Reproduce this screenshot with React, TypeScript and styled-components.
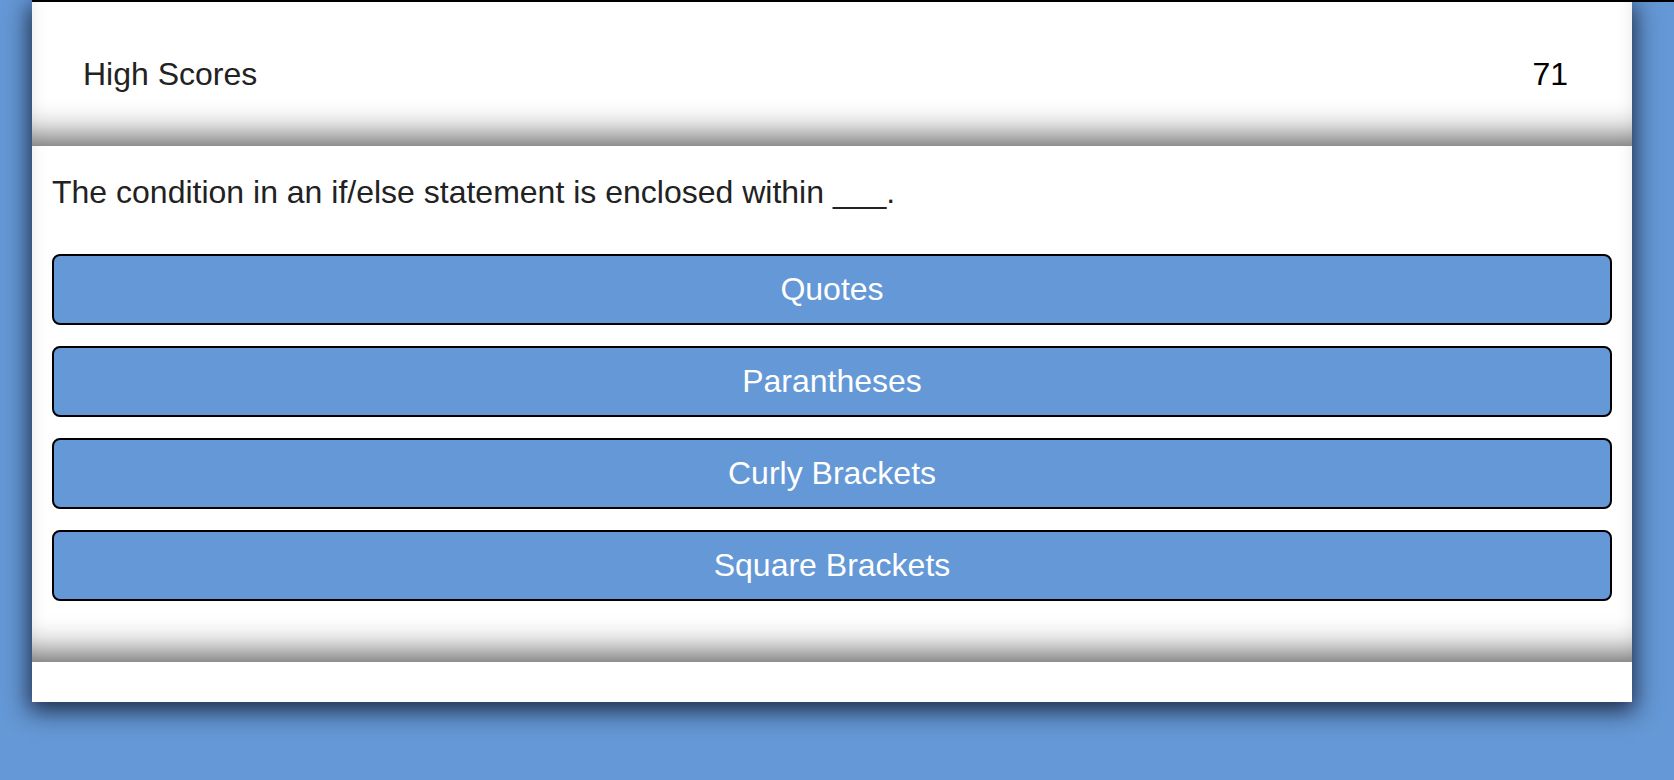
import React from "react";
import styled, { createGlobalStyle } from "styled-components";

const GlobalStyle = createGlobalStyle`
  html, body {
    margin: 0;
    padding: 0;
    background-color: #6598d6;
    font-family: "Liberation Sans", Arial, sans-serif;
  }
`;

const Page = styled.div`
  padding-bottom: 60px;
`;

const TopRule = styled.div`
  position: relative;
  z-index: 2;
  height: 2px;
  margin-left: 32px;
  background-color: #000;
`;

const Card = styled.div`
  position: relative;
  z-index: 1;
  width: 1600px;
  margin-left: 32px;
  background-color: #fff;
  box-shadow: 0 6px 22px 3px rgba(20, 30, 50, 0.88);
`;

const Header = styled.header`
  display: flex;
  justify-content: space-between;
  align-items: center;
  height: 144px;
  padding: 0 64px 0 51px;
  box-sizing: border-box;
  font-size: 32px;
  box-shadow: inset 0 -32px 34px -24px rgba(0, 0, 0, 0.66);
`;

const HighScores = styled.a`
  color: #222;
  text-decoration: none;
  cursor: pointer;
`;

const Timer = styled.span`
  color: #000;
`;

const QuizSection = styled.section`
  padding: 28px 20px 61px;
  box-shadow: inset 0 -32px 34px -24px rgba(0, 0, 0, 0.66);
`;

const Question = styled.p`
  margin: 0 0 44px;
  font-size: 32px;
  line-height: 36px;
  color: #222;
`;

const Choices = styled.div`
  display: flex;
  flex-direction: column;
  gap: 21px;
`;

const ChoiceButton = styled.button`
  height: 71px;
  width: 100%;
  box-sizing: border-box;
  border: 2px solid #000;
  border-radius: 8px;
  background-color: #6598d6;
  color: #fff;
  font-family: "Liberation Sans", Arial, sans-serif;
  font-size: 32px;
  cursor: pointer;
`;

const Footer = styled.footer`
  height: 40px;
`;

const choices = ["Quotes", "Parantheses", "Curly Brackets", "Square Brackets"];

const App = () => {
  return (
    <Page>
      <GlobalStyle />
      <TopRule />
      <Card>
        <Header>
          <HighScores>High Scores</HighScores>
          <Timer>71</Timer>
        </Header>
        <QuizSection>
          <Question>The condition in an if/else statement is enclosed within ___.</Question>
          <Choices>
            {choices.map((c) => (
              <ChoiceButton key={c}>{c}</ChoiceButton>
            ))}
          </Choices>
        </QuizSection>
        <Footer />
      </Card>
    </Page>
  );
};

export default App;
